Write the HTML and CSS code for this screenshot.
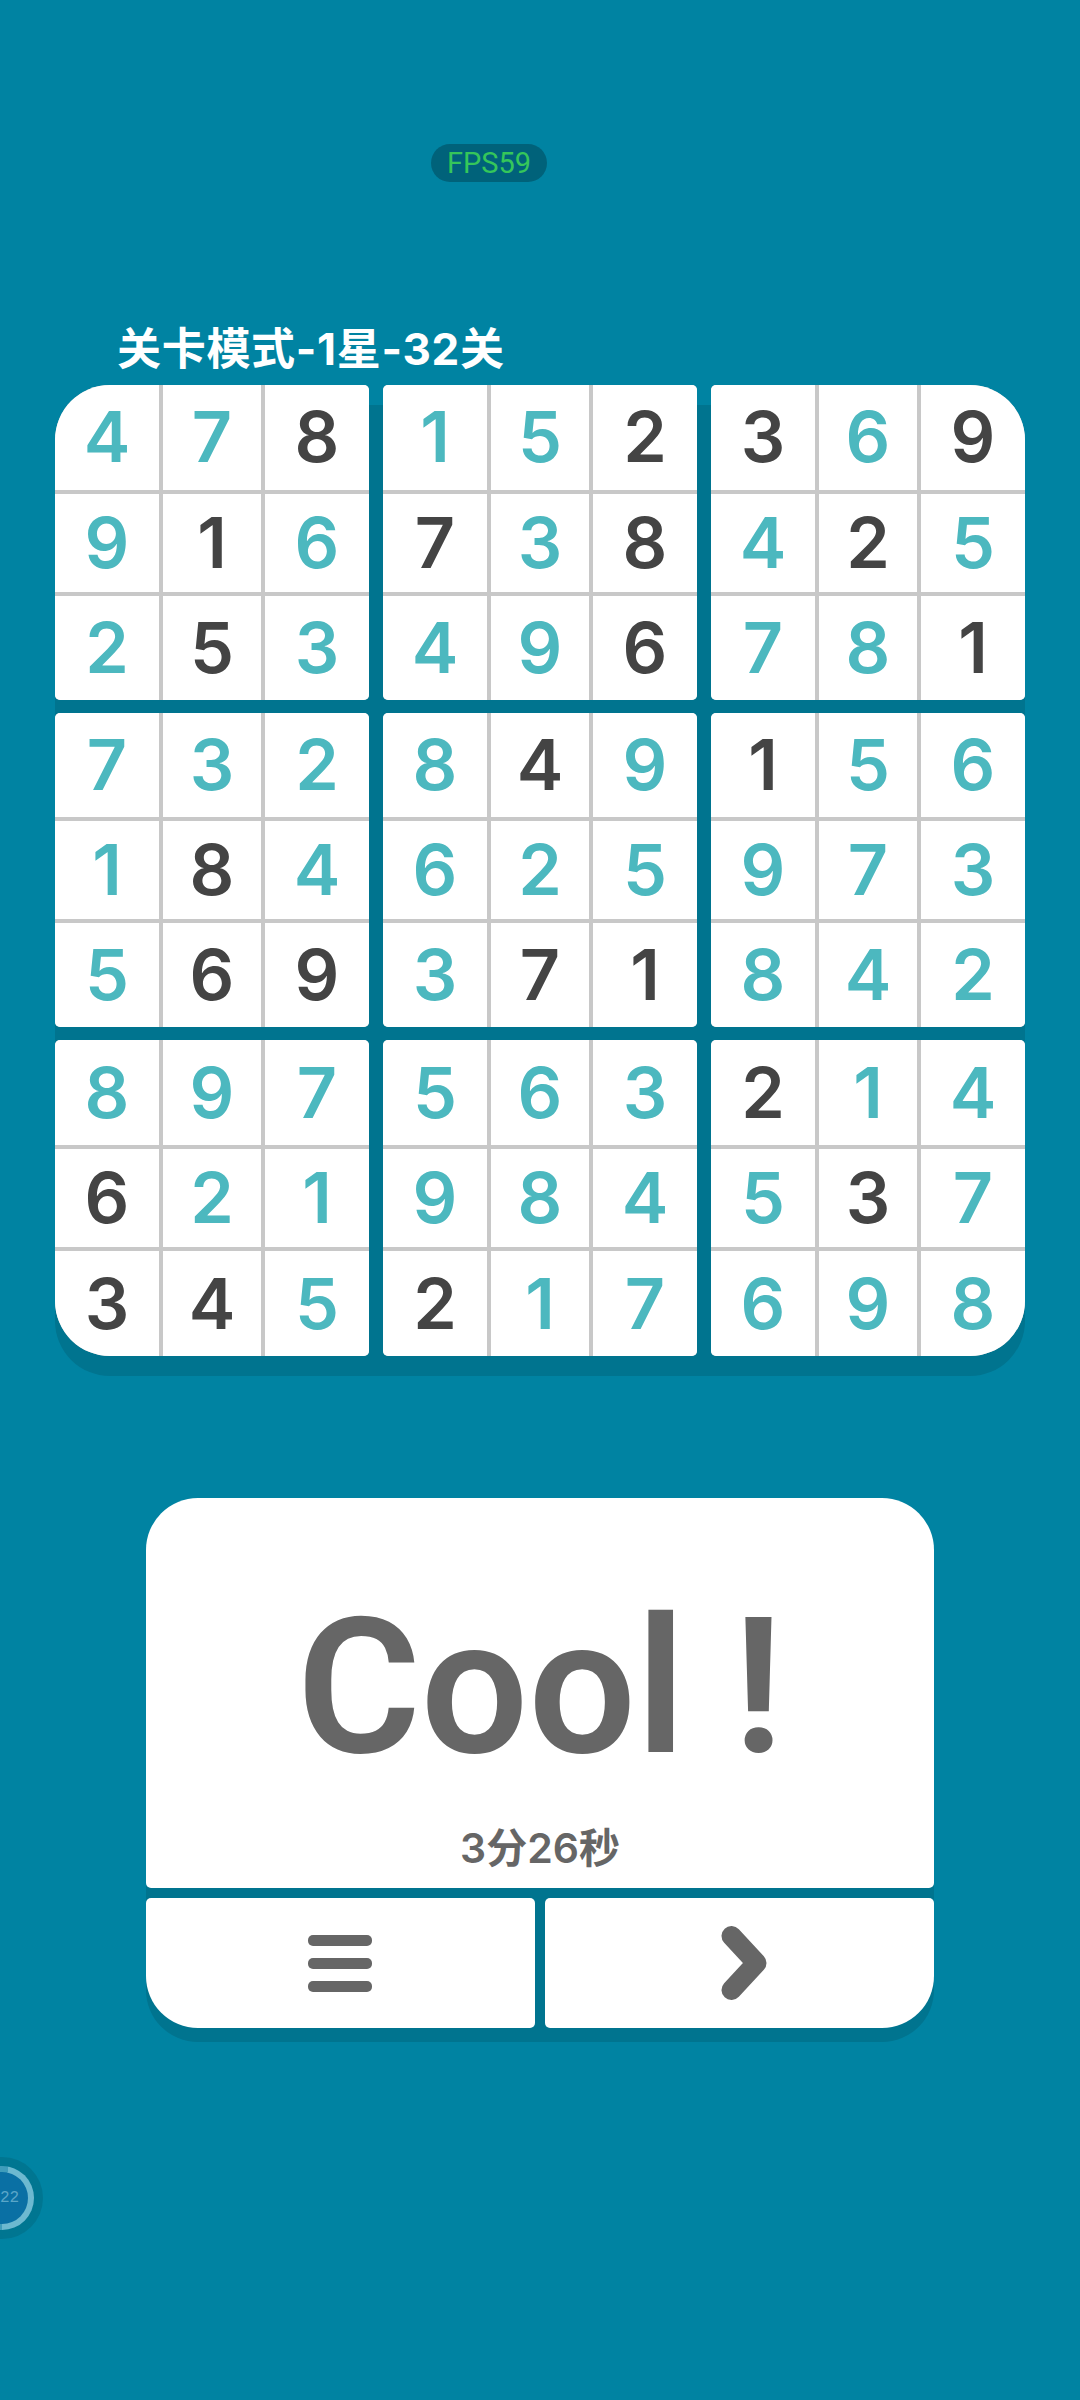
FILE: index.html
```html
<!DOCTYPE html>
<html lang="zh-CN">
<head>
    <meta charset="UTF-8">
    <meta name="viewport" content="width=device-width, initial-scale=1.0">
    <title>数独</title>
    <link rel="stylesheet" href="styles.css">
</head>
<body>
    <div class="fps">FPS59</div>

    <div class="float-ball">
        <div class="float-ring">
            <div class="float-core">22</div>
        </div>
    </div>

    <main class="page">
        <h1 class="level-title">关卡模式-1星-32关</h1>

        <section class="board">
            <div class="block corner-tl">
                <span class="cell">4</span><span class="cell">7</span><span class="cell fixed">8</span>
                <span class="cell">9</span><span class="cell fixed">1</span><span class="cell">6</span>
                <span class="cell">2</span><span class="cell fixed">5</span><span class="cell">3</span>
            </div>
            <div class="block">
                <span class="cell">1</span><span class="cell">5</span><span class="cell fixed">2</span>
                <span class="cell fixed">7</span><span class="cell">3</span><span class="cell fixed">8</span>
                <span class="cell">4</span><span class="cell">9</span><span class="cell fixed">6</span>
            </div>
            <div class="block corner-tr">
                <span class="cell fixed">3</span><span class="cell">6</span><span class="cell fixed">9</span>
                <span class="cell">4</span><span class="cell fixed">2</span><span class="cell">5</span>
                <span class="cell">7</span><span class="cell">8</span><span class="cell fixed">1</span>
            </div>
            <div class="block">
                <span class="cell">7</span><span class="cell">3</span><span class="cell">2</span>
                <span class="cell">1</span><span class="cell fixed">8</span><span class="cell">4</span>
                <span class="cell">5</span><span class="cell fixed">6</span><span class="cell fixed">9</span>
            </div>
            <div class="block">
                <span class="cell">8</span><span class="cell fixed">4</span><span class="cell">9</span>
                <span class="cell">6</span><span class="cell">2</span><span class="cell">5</span>
                <span class="cell">3</span><span class="cell fixed">7</span><span class="cell fixed">1</span>
            </div>
            <div class="block">
                <span class="cell fixed">1</span><span class="cell">5</span><span class="cell">6</span>
                <span class="cell">9</span><span class="cell">7</span><span class="cell">3</span>
                <span class="cell">8</span><span class="cell">4</span><span class="cell">2</span>
            </div>
            <div class="block corner-bl">
                <span class="cell">8</span><span class="cell">9</span><span class="cell">7</span>
                <span class="cell fixed">6</span><span class="cell">2</span><span class="cell">1</span>
                <span class="cell fixed">3</span><span class="cell fixed">4</span><span class="cell">5</span>
            </div>
            <div class="block">
                <span class="cell">5</span><span class="cell">6</span><span class="cell">3</span>
                <span class="cell">9</span><span class="cell">8</span><span class="cell">4</span>
                <span class="cell fixed">2</span><span class="cell">1</span><span class="cell">7</span>
            </div>
            <div class="block corner-br">
                <span class="cell fixed">2</span><span class="cell">1</span><span class="cell">4</span>
                <span class="cell">5</span><span class="cell fixed">3</span><span class="cell">7</span>
                <span class="cell">6</span><span class="cell">9</span><span class="cell">8</span>
            </div>
        </section>

        <section class="result">
            <div class="result-top">
                <div class="result-word">Cool !</div>
                <div class="result-time">3分26秒</div>
            </div>
            <div class="result-actions">
                <button class="action action-menu" aria-label="菜单">
                    <span class="menu-bars"><i></i><i></i><i></i></span>
                </button>
                <button class="action action-next" aria-label="下一关">
                    <svg class="next-icon" viewBox="0 0 46 74" width="46" height="74">
                        <polyline points="10.5,10 35.5,37 10.5,64" fill="none" stroke="#666" stroke-width="20" stroke-linecap="round" stroke-linejoin="round"/>
                    </svg>
                </button>
            </div>
        </section>
    </main>
</body>
</html>
```

FILE: styles.css
```css
* {
    box-sizing: border-box;
}

body {
    font-family: 'Inter', 'Noto Sans CJK SC', sans-serif;
    margin: 0;
    padding: 0;
    width: 1080px;
    height: 2400px;
    overflow: hidden;
    position: relative;
    background-color: #0083a2;
}

.page {
    display: flex;
    flex-direction: column;
    padding: 320px 55px 0;
}

.fps {
    position: absolute;
    top: 144px;
    left: 431px;
    width: 116px;
    height: 38px;
    border-radius: 19px;
    background-color: #00627a;
    color: #35c65a;
    font-family: 'Roboto', sans-serif;
    font-size: 29px;
    line-height: 38px;
    text-align: center;
}

.float-ball {
    position: absolute;
    top: 2157px;
    left: -39px;
    width: 82px;
    height: 82px;
    border-radius: 50%;
    background-color: #007691;
    display: flex;
    align-items: center;
    justify-content: center;
}

.float-ring {
    width: 64px;
    height: 64px;
    border-radius: 50%;
    padding: 6px;
    background: conic-gradient(#3f9dbb 0deg 12deg, #6db9d0 12deg 180deg, #3f9dbb 180deg);
}

.float-core {
    width: 100%;
    height: 100%;
    border-radius: 50%;
    padding-left: 24px;
    background-color: #0a70a4;
    color: #5aa6c8;
    font-family: 'Liberation Mono', monospace;
    font-size: 16px;
    line-height: 52px;
    white-space: nowrap;
}

.level-title {
    margin: 0 0 7px 62px;
    color: #fff;
    font-size: 44px;
    font-weight: 700;
    line-height: 58px;
    letter-spacing: 0.7px;
    white-space: nowrap;
}

.board {
    position: relative;
    display: grid;
    grid-template-columns: repeat(3, 1fr);
    grid-template-rows: 315px 314px 316px;
    gap: 13px 14px;
    width: 970px;
    height: 971px;
}

/* the darker board underneath, shows through the gaps and below */
.board::before {
    content: "";
    position: absolute;
    top: 20px;
    left: 0;
    right: 0;
    bottom: -20px;
    border-radius: 55px;
    background-color: #00748f;
}

.block {
    position: relative;
    display: grid;
    grid-template-columns: 1fr 98px 1fr;
    grid-template-rows: 1fr 98px 1fr;
    gap: 4px;
    border-radius: 5px;
    overflow: hidden;
    background-color: #c8c8c8;
}

.corner-tl {
    border-top-left-radius: 55px;
}

.corner-tr {
    border-top-right-radius: 55px;
}

.corner-bl {
    border-bottom-left-radius: 55px;
}

.corner-br {
    border-bottom-right-radius: 55px;
}

.cell {
    display: flex;
    align-items: center;
    justify-content: center;
    background-color: #fff;
    color: #4cb8bf;
    font-size: 70px;
    font-weight: 600;
    line-height: 1;
}

.cell.fixed {
    color: #444;
}

.result {
    position: relative;
    display: flex;
    flex-direction: column;
    gap: 10px;
    width: 788px;
    margin: 142px 0 0 91px;
}

.result::before {
    content: "";
    position: absolute;
    top: 20px;
    left: 0;
    right: 0;
    bottom: -14px;
    border-radius: 52px;
    background-color: #00748f;
}

.result-top {
    position: relative;
    display: flex;
    flex-direction: column;
    align-items: center;
    height: 390px;
    border-radius: 52px 52px 5px 5px;
    background-color: #fff;
    color: #666;
}

.result-word {
    margin-top: 89px;
    font-family: 'Roboto', sans-serif;
    font-size: 190px;
    font-weight: 650;
    line-height: 200px;
    white-space: nowrap;
}

.result-time {
    margin-top: 33px;
    font-size: 41px;
    font-weight: 600;
    line-height: 56px;
}

.result-actions {
    position: relative;
    display: flex;
    gap: 10px;
    height: 130px;
}

.action {
    flex: 1;
    display: flex;
    align-items: center;
    justify-content: center;
    padding: 0;
    border: none;
    background-color: #fff;
}

.action-menu {
    border-radius: 5px 5px 5px 52px;
}

.action-next {
    border-radius: 5px 5px 52px 5px;
}

.menu-bars {
    display: flex;
    flex-direction: column;
    gap: 12px;
    width: 64px;
    margin-right: 2px;
}

.menu-bars i {
    display: block;
    height: 11px;
    border-radius: 5px;
    background-color: #666;
}

.next-icon {
    display: block;
    margin-left: 9px;
}
```
